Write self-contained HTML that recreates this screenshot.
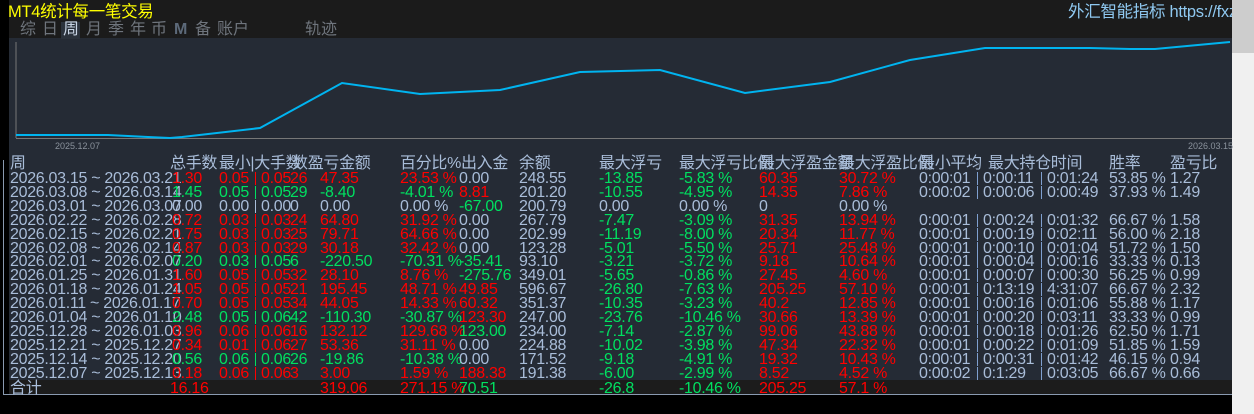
<!DOCTYPE html>
<html><head><meta charset="utf-8">
<style>
*{margin:0;padding:0;box-sizing:border-box}
body{width:1254px;height:414px;background:#000;position:relative;overflow:hidden;font-family:"Liberation Sans","Noto Sans CJK SC",sans-serif}
#hdr{position:absolute;left:9px;top:0;width:1223px;height:38px;background:#1b1b1b}
#main{position:absolute;left:9px;top:38px;width:1223px;height:343px;background:#252b35}
#tot{position:absolute;left:9px;top:380px;width:1223px;height:15px;background:#1c1c1c}
#line{position:absolute;left:3px;top:394px;width:1229px;height:1px;background:#8a9ab0}
#vline{position:absolute;left:3px;top:160px;width:1px;height:235px;background:#8a9ab0}
#sb{position:absolute;left:1232px;top:0;width:22px;height:414px;background:#f0f0f0}
#thumb{position:absolute;left:1232px;top:0;width:22px;height:53px;background:#cdcdcd}
.t{position:absolute;white-space:nowrap;font-size:16px;line-height:14px;color:#a9bdd9;letter-spacing:-0.3px}
.r{color:#ff0000}.g{color:#00e060}
.tab{position:absolute;top:21px;font-size:16px;color:#6f757d;line-height:18px}
.sep{position:absolute;width:1px;height:13px}
</style></head><body>
<div id="hdr"></div><div id="main"></div><div id="sb"></div><div id="thumb"></div>
<div class="t" style="left:8px;top:3px;color:#ffff00;font-size:16.5px;line-height:18px">MT4统计每一笔交易</div>
<div class="t" style="left:1068px;top:3px;color:#8fc8f0;font-size:16.5px;line-height:18px;width:164px;overflow:hidden">外汇智能指标 https://fxzn</div>
<div style="position:absolute;left:61px;top:22px;width:19px;height:17px;background:#2b323c"></div>
<div class="tab" style="left:20px">综</div><div class="tab" style="left:42px">日</div>
<div class="tab" style="left:63px;color:#c8d4e4">周</div><div class="tab" style="left:86px">月</div>
<div class="tab" style="left:108px">季</div><div class="tab" style="left:130px">年</div>
<div class="tab" style="left:151px">币</div><div class="tab" style="left:174px;color:#5d6a7a;font-weight:bold">M</div>
<div class="tab" style="left:195px">备</div><div class="tab" style="left:217px">账户</div>
<div class="tab" style="left:305px">轨迹</div>
<svg style="position:absolute;left:0;top:0" width="1254" height="160">
<line x1="16" y1="42" x2="16" y2="138" stroke="#777" stroke-width="1"/>
<line x1="16" y1="138.5" x2="1232" y2="138.5" stroke="#777" stroke-width="1"/>
<polyline fill="none" stroke="#00b4f0" stroke-width="2" points="16,135 108,135 128,136 148,137 170,138 182,137 260,128 342,83 420,94 500,90 580,72 660,70 745,93 830,82 910,60 985,48 1090,48 1130,49 1155,49 1230,42"/>
<text x="55" y="149" font-size="9" fill="#8a929c" font-family="Liberation Sans">2025.12.07</text>
<text x="1188" y="149" font-size="9" fill="#8a929c" font-family="Liberation Sans">2026.03.15</text>
</svg>
<div id="rows"></div>
<div id="tot"></div><div id="line"></div><div id="vline"></div>
<div id="tots"></div>
<script>
var H=[[10,"周"],[170,"总手数"],[219,"最小|大手数"],[292,"数盈亏金额"],[400,"百分比%出入金"],[519,"余额"],[599,"最大浮亏"],[679,"最大浮亏比例"],[759,"最大浮盈金额"],[839,"最大浮盈比例"],[919,"最小平均"],[988,"最大持仓时间"],[1109,"胜率"],[1170,"盈亏比"]];
var s="";
H.forEach(function(h){s+='<div class="t" style="left:'+h[0]+'px;top:157px">'+h[1]+'</div>'});
var D=[
["2026.03.15 ~ 2026.03.21","1.30","r","0.05","0.05","26","47.35","r","23.53 %","r","0.00","","248.55","-13.85","-5.83 %","60.35","30.72 %","r","01","11","1:24","53.85","1.27"],
["2026.03.08 ~ 2026.03.14","1.45","g","0.05","0.05","29","-8.40","g","-4.01 %","g","8.81","r","201.20","-10.55","-4.95 %","14.35","7.86 %","r","02","06","0:49","37.93","1.49"],
["2026.03.01 ~ 2026.03.07","0.00","","0.00","0.00","0","0.00","","0.00 %","","-67.00","g","200.79","0.00","0.00 %","0","0.00 %","",null],
["2026.02.22 ~ 2026.02.28","0.72","r","0.03","0.03","24","64.80","r","31.92 %","r","0.00","","267.79","-7.47","-3.09 %","31.35","13.94 %","r","01","24","1:32","66.67","1.58"],
["2026.02.15 ~ 2026.02.21","0.75","r","0.03","0.03","25","79.71","r","64.66 %","r","0.00","","202.99","-11.19","-8.00 %","20.34","11.77 %","r","01","19","2:11","56.00","2.18"],
["2026.02.08 ~ 2026.02.14","0.87","r","0.03","0.03","29","30.18","r","32.42 %","r","0.00","","123.28","-5.01","-5.50 %","25.71","25.48 %","r","01","10","1:04","51.72","1.50"],
["2026.02.01 ~ 2026.02.07","0.20","g","0.03","0.05","6","-220.50","g","-70.31 %","g","-35.41","g","93.10","-3.21","-3.72 %","9.18","10.64 %","r","01","04","0:16","33.33","0.13"],
["2026.01.25 ~ 2026.01.31","1.60","r","0.05","0.05","32","28.10","r","8.76 %","r","-275.76","g","349.01","-5.65","-0.86 %","27.45","4.60 %","r","01","07","0:30","56.25","0.99"],
["2026.01.18 ~ 2026.01.24","1.05","r","0.05","0.05","21","195.45","r","48.71 %","r","49.85","r","596.67","-26.80","-7.63 %","205.25","57.10 %","r","01","13:19","4:31:07","66.67","2.32"],
["2026.01.11 ~ 2026.01.17","0.70","r","0.05","0.05","34","44.05","r","14.33 %","r","60.32","r","351.37","-10.35","-3.23 %","40.2","12.85 %","r","01","16","1:06","55.88","1.17"],
["2026.01.04 ~ 2026.01.10","2.48","g","0.05","0.06","42","-110.30","g","-30.87 %","g","123.30","r","247.00","-23.76","-10.46 %","30.66","13.39 %","r","01","20","3:11","33.33","0.99"],
["2025.12.28 ~ 2026.01.03","0.96","r","0.06","0.06","16","132.12","r","129.68 %","r","123.00","g","234.00","-7.14","-2.87 %","99.06","43.88 %","r","01","18","1:26","62.50","1.71"],
["2025.12.21 ~ 2025.12.27","0.34","r","0.01","0.06","27","53.36","r","31.11 %","r","0.00","","224.88","-10.02","-3.98 %","47.34","22.32 %","r","01","22","1:09","51.85","1.59"],
["2025.12.14 ~ 2025.12.20","0.56","g","0.06","0.06","26","-19.86","g","-10.38 %","g","0.00","","171.52","-9.18","-4.91 %","19.32","10.43 %","r","01","31","1:42","46.15","0.94"],
["2025.12.07 ~ 2025.12.13","0.18","r","0.06","0.06","3","3.00","r","1.59 %","r","188.38","r","191.38","-6.00","-2.99 %","8.52","4.52 %","r","02","1:29","3:05","66.67","0.66"]];
function c(x,y,t,cl){return '<div class="t '+(cl||"")+'" style="left:'+x+'px;top:'+y+'px">'+t+'</div>'}
D.forEach(function(d,i){var y=Math.round(172+i*13.9);var sc=d[2]=="r"?"#ff0000":(d[2]=="g"?"#00e060":"#a9bdd9");
s+=c(10,y,d[0]);s+=c(172,y,d[1],d[2]);s+=c(219,y,d[3],d[2]);
s+='<div class="sep" style="left:255px;top:'+y+'px;background:'+sc+'"></div>';
s+=c(261,y,d[4],d[2]);s+=c(290,y,d[5],d[2]);s+=c(320,y,d[6],d[7]);s+=c(400,y,d[8],d[9]);
s+=c(459,y,d[10],d[11]);s+=c(519,y,d[12]);s+=c(599,y,d[13],d[13]=="0.00"?"":"g");s+=c(679,y,d[14],d[14]=="0.00 %"?"":"g");
s+=c(759,y,d[15],d[17]);s+=c(839,y,d[16],d[17]);
if(d[18]){s+=c(919,y,"0:00:"+d[18]);s+='<div class="sep" style="left:977px;top:'+y+'px;background:#7fa0d0"></div>';
s+=c(983,y,d[19].length>2?"0:"+d[19]:"0:00:"+d[19]);s+='<div class="sep" style="left:1041px;top:'+y+'px;background:#7fa0d0"></div>';
s+=c(1047,y,d[20].length>4?d[20]:"0:0"+d[20]);s+=c(1109,y,d[21]+" %");s+=c(1170,y,d[22]);}
});
document.getElementById("rows").innerHTML=s;
var T=[[10,"合计",""],[170,"16.16","r"],[320,"319.06","r"],[400,"271.15 %","r"],[459,"70.51","g"],[599,"-26.8","g"],[679,"-10.46 %","g"],[759,"205.25","r"],[839,"57.1 %","r"]];
var u="";T.forEach(function(t){u+=c(t[0],382,t[1],t[2])});
document.getElementById("tots").innerHTML=u;
</script>
</body></html>
